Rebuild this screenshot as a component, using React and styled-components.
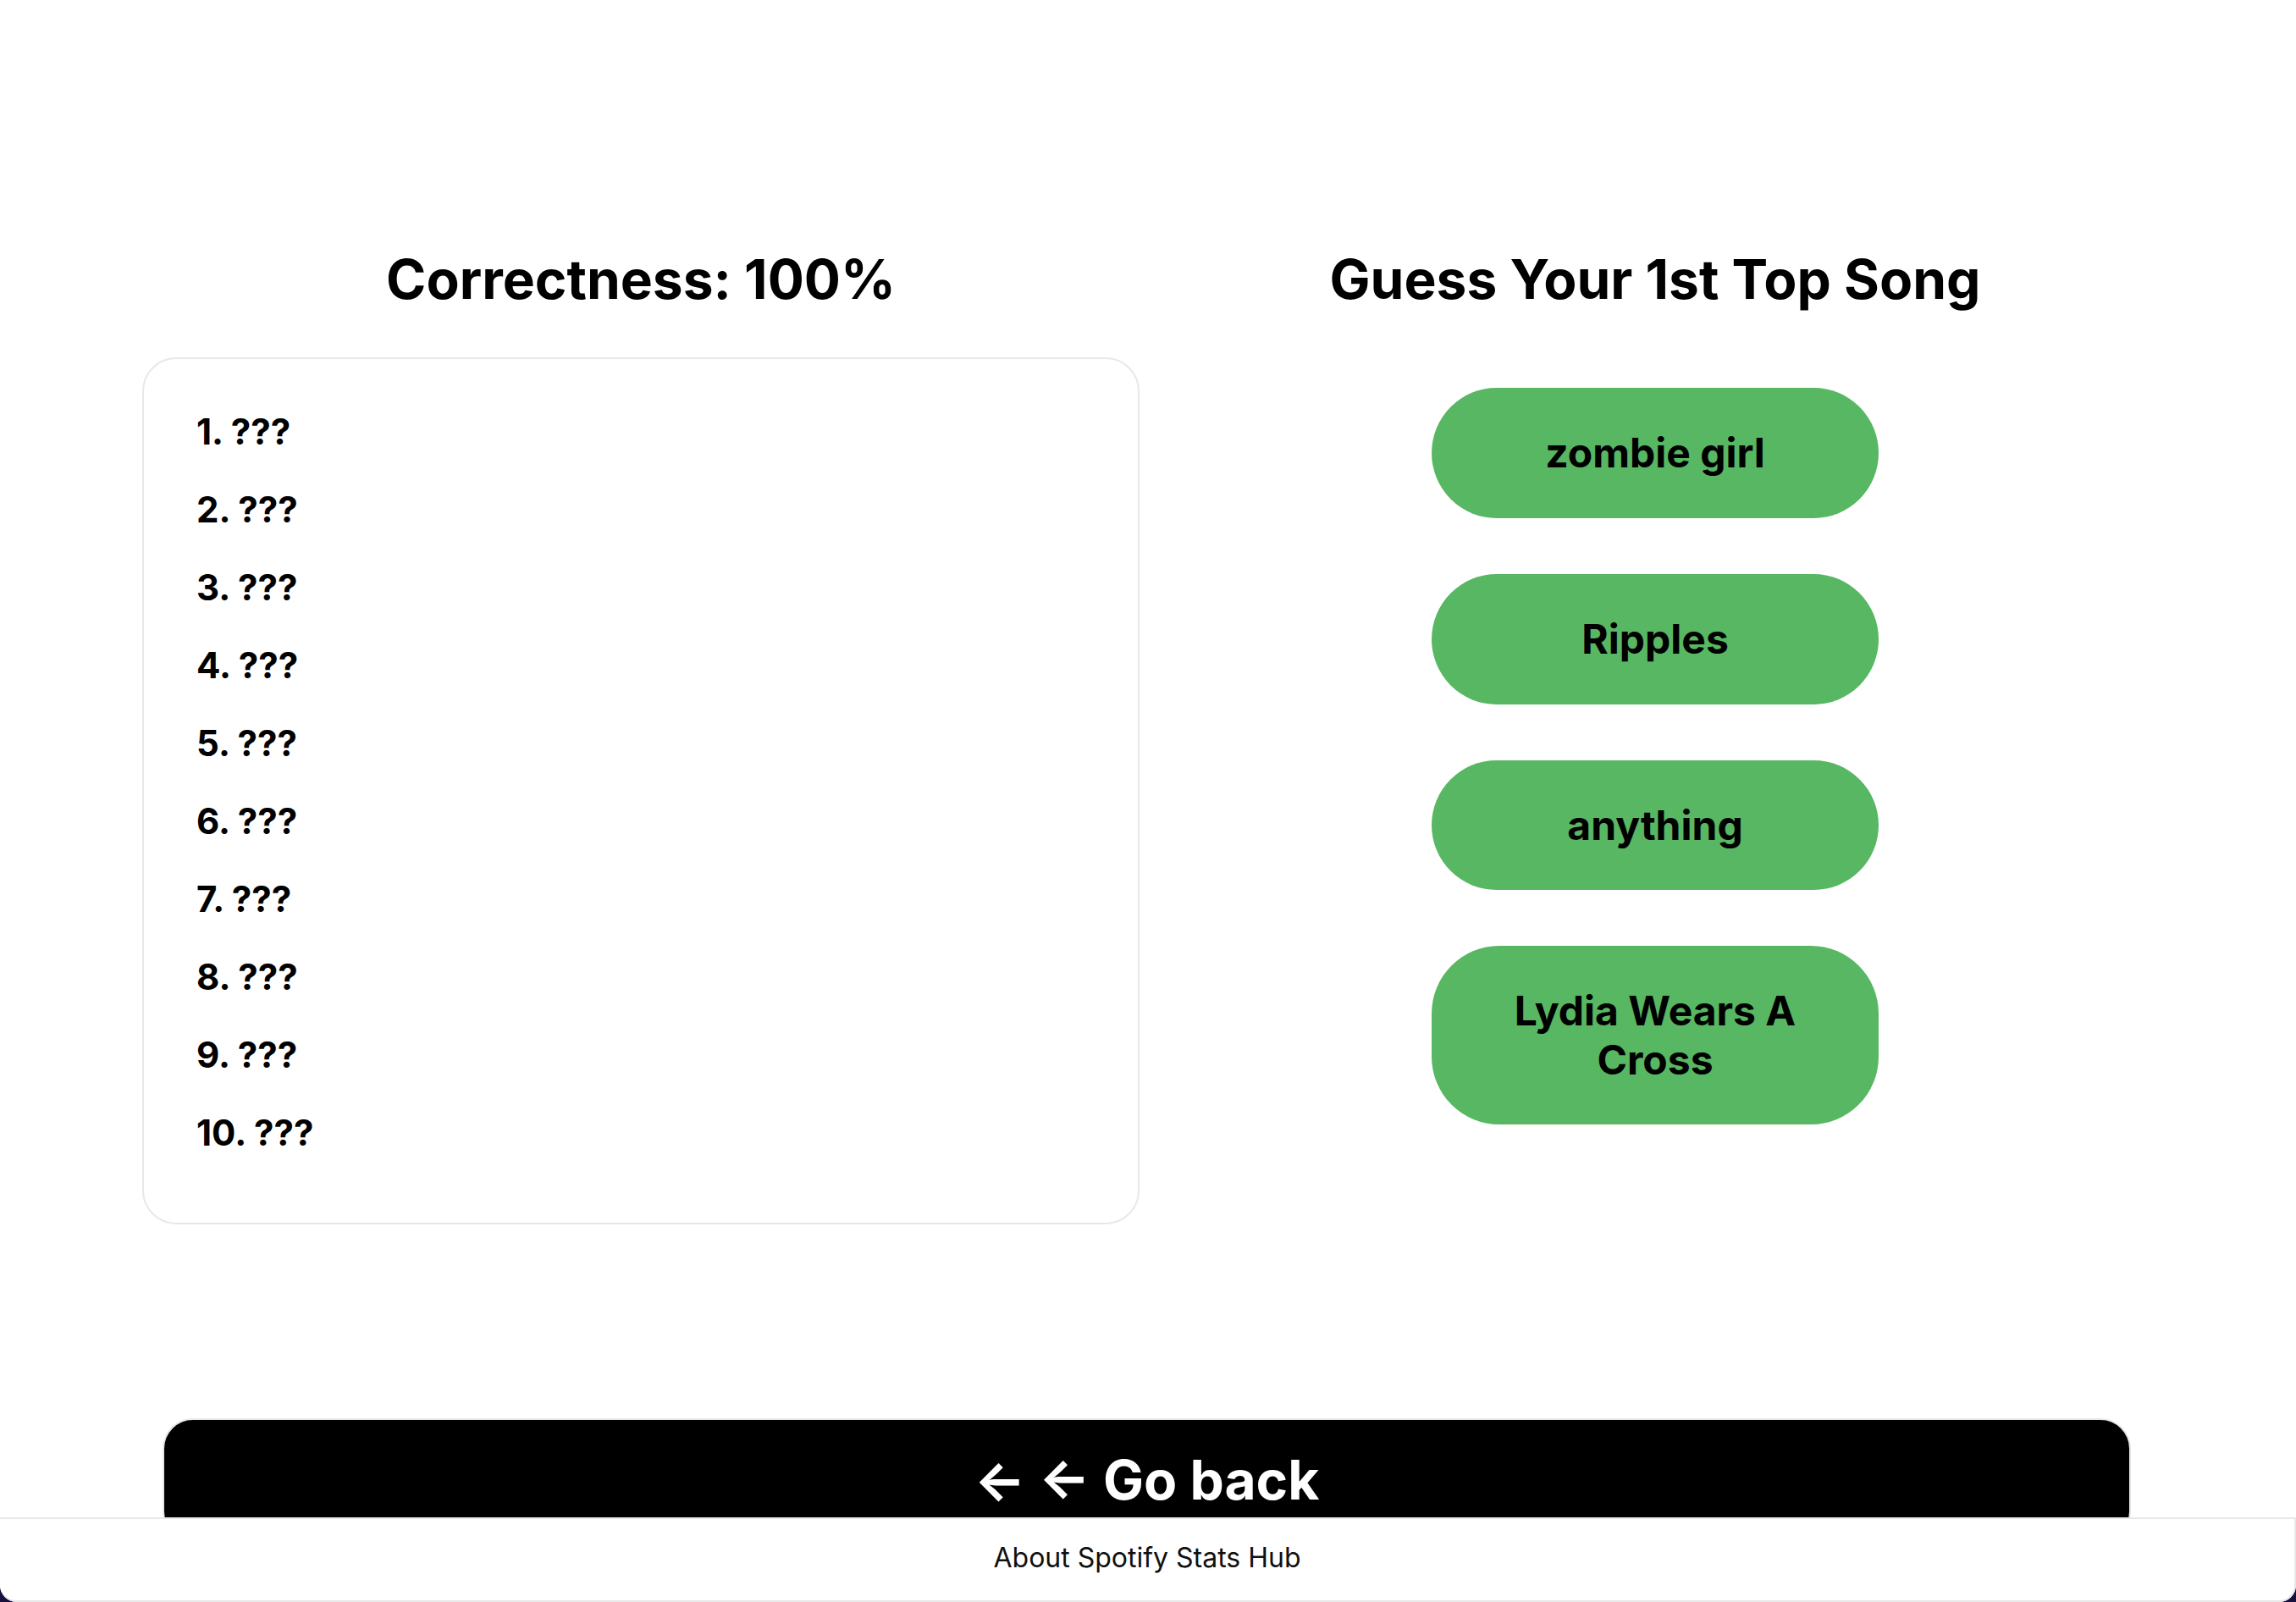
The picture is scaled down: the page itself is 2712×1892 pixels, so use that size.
import React from "react";
import styled, { createGlobalStyle } from "styled-components";

const GlobalStyle = createGlobalStyle`
  html, body {
    margin: 0;
    padding: 0;
    background: #1a1040;
  }
  body {
    font-family: Inter, "Noto Sans", sans-serif;
    color: #000;
  }
`;

const Page = styled.div`
  min-height: 100vh;
  background: #ffffff;
  border-radius: 0 0 20px 20px;
  overflow: hidden;
  box-sizing: border-box;
  padding-top: 291px;
`;

const Columns = styled.div`
  display: grid;
  grid-template-columns: 1fr 1fr;
  column-gap: 20px;
  padding: 0 168px;
`;

const Column = styled.section`
  display: flex;
  flex-direction: column;
  align-items: center;
`;

const Heading = styled.h2`
  margin: 0 0 54px;
  font-size: 64px;
  line-height: 1.21;
  font-weight: 700;
  text-align: center;
`;

const Card = styled.ol`
  align-self: stretch;
  list-style: none;
  margin: 0;
  padding: 60px 60px 80px 62px;
  border: 2px solid #e8e8e8;
  border-radius: 40px;
  display: flex;
  flex-direction: column;
  gap: 40px;
`;

const Item = styled.li`
  font-size: 42px;
  line-height: 52px;
  font-weight: 700;
`;

const Choices = styled.div`
  display: flex;
  flex-direction: column;
  align-items: center;
  gap: 66px;
  padding-top: 36px;
`;

const Choice = styled.button`
  width: 528px;
  padding: 48px;
  border: none;
  border-radius: 80px;
  background: #58b762;
  color: #000;
  font-family: Inter, "Noto Sans", sans-serif;
  font-size: 48px;
  line-height: 1.2;
  font-weight: 700;
  cursor: pointer;
`;

const BackBar = styled.div`
  padding: 229px 195px 0 192px;
`;

const BackButton = styled.button`
  width: 100%;
  padding: 32px;
  background: #000;
  color: #fff;
  border: 2px solid #e8e8e8;
  border-radius: 36px;
  font-family: Inter, "Noto Sans", sans-serif;
  font-size: 64px;
  line-height: 1.21;
  font-weight: 700;
  cursor: pointer;
`;

const Footer = styled.footer`
  position: fixed;
  left: 0;
  right: 0;
  bottom: 0;
  height: 100px;
  box-sizing: border-box;
  padding-bottom: 6px;
  display: flex;
  align-items: center;
  justify-content: center;
  background: #fff;
  border-top: 2px solid #e8e8e8;
  border-right: 2px solid #e8e8e8;
  border-bottom: 2px solid #e8e8e8;
  border-radius: 0 0 20px 20px;
  font-size: 32px;
  color: #111;
`;

const songs = ["zombie girl", "Ripples", "anything", "Lydia Wears A Cross"];

export default function App() {
  return (
    <>
      <GlobalStyle />
      <Page>
        <Columns>
          <Column>
            <Heading>Correctness: 100%</Heading>
            <Card>
              {Array.from({ length: 10 }, (_, i) => (
                <Item key={i}>{i + 1}. ???</Item>
              ))}
            </Card>
          </Column>
          <Column>
            <Heading>Guess Your 1st Top Song</Heading>
            <Choices>
              {songs.map((s) => (
                <Choice key={s}>{s}</Choice>
              ))}
            </Choices>
          </Column>
        </Columns>
        <BackBar>
          <BackButton>← ← Go back</BackButton>
        </BackBar>
      </Page>
      <Footer>About Spotify Stats Hub</Footer>
    </>
  );
}
